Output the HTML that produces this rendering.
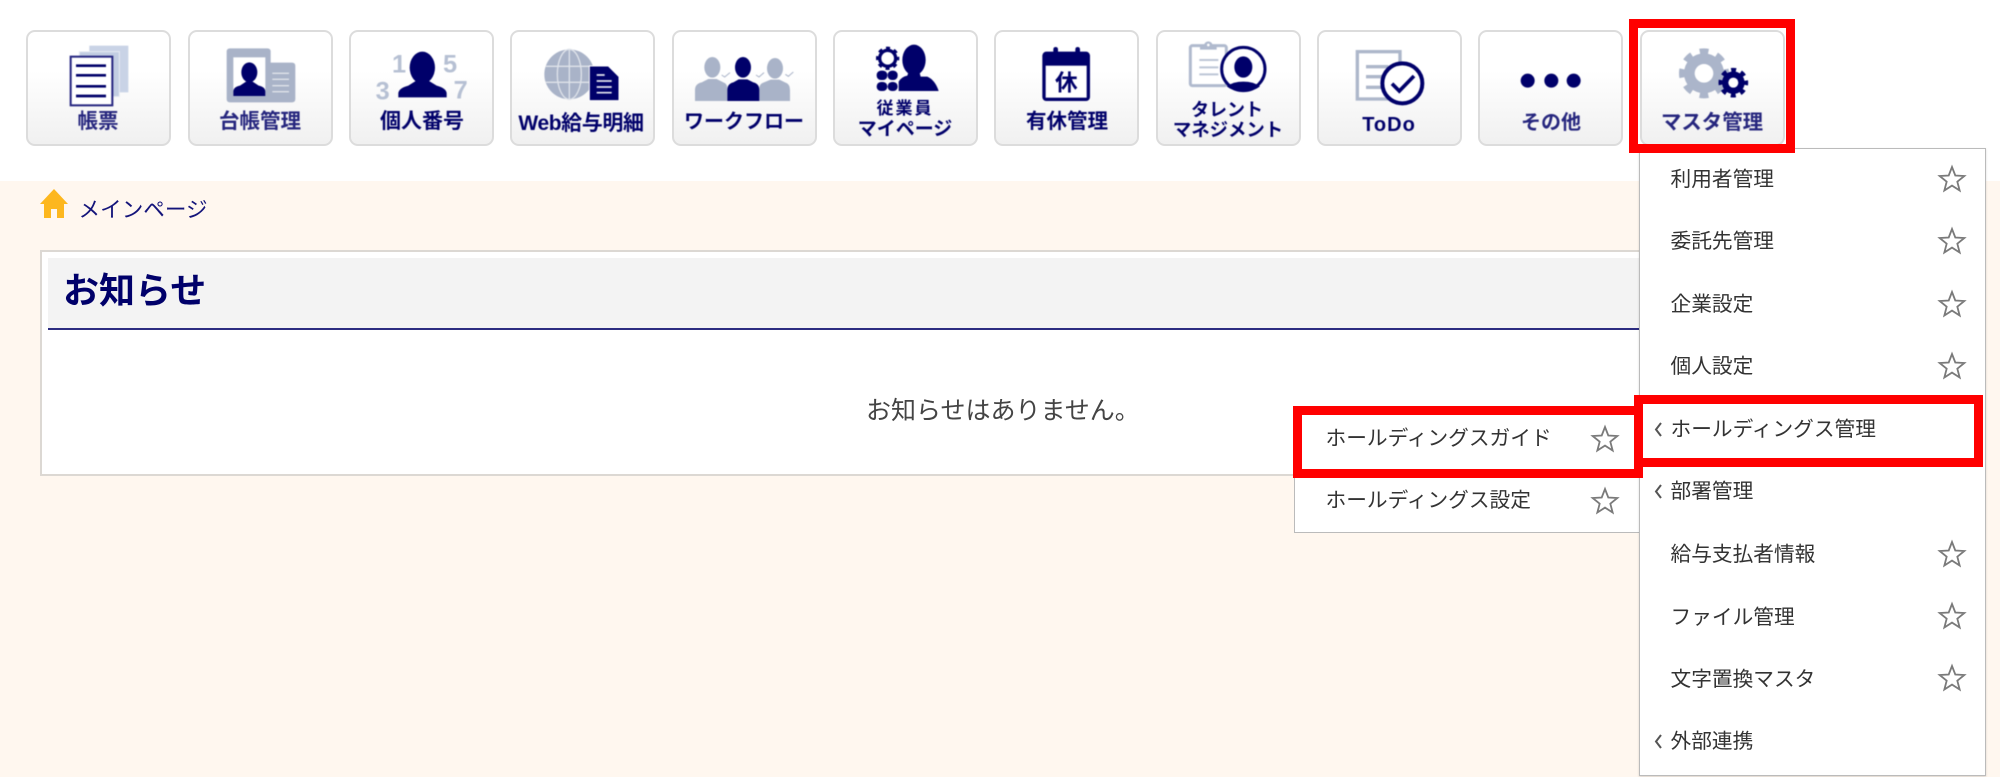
<!DOCTYPE html>
<html lang="ja"><head><meta charset="utf-8"><title>メインページ</title>
<style>
html,body{margin:0;padding:0;width:2000px;height:777px;overflow:hidden;background:#fff}
body{position:relative;font-family:"Liberation Sans","Noto Sans CJK JP",sans-serif;color:#333}
.a{position:absolute}
.btn{position:absolute;top:30px;width:145px;height:116px;box-sizing:border-box;border:2px solid #dcdcdc;border-radius:9px;background:linear-gradient(#fff 0%,#fff 35%,#f0f0f0 100%)}
.l{position:absolute;height:30px;line-height:30px;margin-top:1.5px;text-align:center;font-weight:700;color:#00006a;white-space:nowrap;filter:blur(.45px);transform:translateX(-50%)}
.t{position:absolute;height:30px;line-height:30px;margin-top:2px;font-size:20.7px;white-space:nowrap;color:#333}
.red{position:absolute;box-sizing:border-box;border:9px solid #f00}
</style></head><body>
<div class="a" style="left:0;top:181px;width:2000px;height:596px;background:#fff7ef"></div>

<div class="btn" style="left:26px"></div>
<div class="btn" style="left:187.5px"></div>
<div class="btn" style="left:348.5px"></div>
<div class="btn" style="left:510px"></div>
<div class="btn" style="left:671.5px"></div>
<div class="btn" style="left:833px"></div>
<div class="btn" style="left:994px"></div>
<div class="btn" style="left:1155.5px"></div>
<div class="btn" style="left:1317px"></div>
<div class="btn" style="left:1478px"></div>
<div class="btn" style="left:1639.5px"></div>

<svg class="a" style="left:0;top:0;filter:blur(.4px)" width="2000" height="181" viewBox="0 0 2000 181">
<g transform="translate(20,25) scale(.33333)">
 <rect x="208" y="62" width="117" height="140" fill="#c9d3e6"/>
 <rect x="178" y="80" width="120" height="135" fill="#c2cde2" stroke="#e8ecf3" stroke-width="3"/>
 <rect x="152" y="95" width="125" height="146" fill="#fff" stroke="#24247f" stroke-width="6"/>
 <path d="M168 122H258M168 151H258M168 184H258M168 213H258" stroke="#00006a" stroke-width="8"/>
 <path d="M630 70H742Q752 70 752 80V113H816Q826 113 826 123V222Q826 232 816 232H630Q620 232 620 222V80Q620 70 630 70Z" fill="#a9b3c8"/>
 <rect x="640" y="97" width="96" height="116" fill="#fff"/>
 <ellipse cx="688" cy="142" rx="24" ry="30" fill="#00006a"/>
 <path d="M640 213V200Q640 186 660 182L678 170H698L716 182Q736 186 736 200V213Z" fill="#00006a"/>
 <path d="M757 145H807M757 163H807M757 182H807M757 200H807" stroke="#dfe3ea" stroke-width="4"/>
 <ellipse cx="1207" cy="128" rx="38" ry="48" fill="#00006a"/>
 <path d="M1135 217V206Q1135 190 1165 182L1190 166H1224L1250 182Q1280 190 1280 206V217Z" fill="#00006a"/>
 <g fill="#b6c0d3" font-family="Liberation Sans" font-weight="700" font-size="76" text-anchor="middle">
  <text x="1137" y="142">1</text><text x="1290" y="142">5</text><text x="1088" y="224">3</text><text x="1322" y="220">7</text>
 </g>
</g>
<g transform="translate(500,25) scale(.33333)">
 <circle cx="208" cy="148" r="75" fill="#a9b3c8"/>
 <g fill="none" stroke="#dfe3ea" stroke-width="4"><ellipse cx="208" cy="148" rx="36" ry="75"/><path d="M208 73V223M137 124H279M137 172H279"/></g>
 <path d="M268 123H325L357 155V227H268Z" fill="#00006a" stroke="#fff" stroke-width="3"/>
 <path d="M290 150H314M290 168H335M290 186H335M290 203H335" stroke="#e6e8f0" stroke-width="5"/>
 <g fill="#a9b3c8">
  <ellipse cx="637" cy="127" rx="24" ry="31"/><path d="M585 228V195Q585 176 605 172L625 162H650L670 172Q682 176 682 190V228Z"/>
  <ellipse cx="825" cy="130" rx="24" ry="31"/><path d="M778 228V190Q778 176 792 172L812 164H838L855 172Q870 176 870 195V228Z"/>
 </g>
 <ellipse cx="729" cy="127" rx="24" ry="31" fill="#00006a"/>
 <path d="M682 228V195Q682 176 700 172L716 163H742L760 172Q778 176 778 195V228Z" fill="#00006a"/>
 <path d="M665 150L674 156L690 143M768 150L777 156L792 143M856 148L865 154L880 141" fill="none" stroke="#a9b3c8" stroke-width="3"/>
 <circle cx="1163" cy="100" r="24" fill="#fff" stroke="#00006a" stroke-width="10"/>
 <circle cx="1163" cy="100" r="29" fill="none" stroke="#00006a" stroke-width="12" stroke-dasharray="11.4 11.4" stroke-dashoffset="5.7"/>
 <circle cx="1163" cy="100" r="13" fill="#fff"/>
 <g fill="#00006a"><rect x="1130" y="137" width="32" height="28" rx="13"/><rect x="1163" y="137" width="30" height="28" rx="13"/><rect x="1130" y="171" width="32" height="27" rx="13"/><rect x="1163" y="171" width="30" height="27" rx="13"/>
 <ellipse cx="1242" cy="105" rx="35" ry="46"/><path d="M1196 198V170Q1205 155 1222 152L1226 140H1258L1262 155H1282Q1305 165 1316 198Z"/></g>
</g>
<g transform="translate(1000,25) scale(.33333)">
 <rect x="127" y="80" width="143" height="148" rx="12" fill="#00006a"/>
 <rect x="160" y="66" width="14" height="30" rx="7" fill="#00006a"/><rect x="226" y="66" width="14" height="30" rx="7" fill="#00006a"/>
 <rect x="137" y="122" width="123" height="96" fill="#fff"/>
 <text x="199" y="196" text-anchor="middle" font-family="Noto Sans CJK JP" font-weight="700" font-size="68" fill="#00006a">休</text>
 <rect x="571" y="62" width="108" height="120" rx="6" fill="#fff" stroke="#b0bace" stroke-width="9"/>
 <path d="M600 62H612A13 13 0 0 1 638 62H650V74H600Z" fill="#b0bace"/><circle cx="625" cy="60" r="4" fill="#fff"/>
 <path d="M598 105H655M598 127H655M598 148H655" stroke="#bcc5d6" stroke-width="6"/>
 <circle cx="730" cy="132" r="65" fill="#fff" stroke="#00006a" stroke-width="9"/>
 <ellipse cx="730" cy="126" rx="27" ry="32" fill="#00006a"/>
 <path d="M680 184Q700 170 730 170Q760 170 780 184Q760 200 730 200Q700 200 680 184Z" fill="#00006a"/>
 <rect x="1072" y="80" width="128" height="142" fill="#fff" stroke="#adb7ca" stroke-width="10"/>
 <path d="M1098 125H1165M1098 155H1155M1098 187H1150" stroke="#adb7ca" stroke-width="10"/>
 <circle cx="1207" cy="175" r="60" fill="#fff" stroke="#00006a" stroke-width="12"/>
 <path d="M1176 176L1198 198L1242 153" fill="none" stroke="#00006a" stroke-width="11"/>
</g>
<g transform="translate(1480,15) scale(.33333)">
 <g fill="#00006a"><circle cx="143" cy="197" r="21"/><circle cx="214" cy="197" r="21"/><circle cx="281" cy="197" r="21"/></g>
 <circle cx="672" cy="175" r="60" fill="#abb5ca"/>
 <circle cx="672" cy="175" r="66" fill="none" stroke="#abb5ca" stroke-width="18" stroke-dasharray="25.9 25.9" stroke-dashoffset="13"/>
 <circle cx="672" cy="175" r="28" fill="#fff"/>
 <circle cx="760" cy="203" r="34" fill="#00006a"/>
 <circle cx="760" cy="203" r="38" fill="none" stroke="#00006a" stroke-width="13" stroke-dasharray="14.9 14.9" stroke-dashoffset="7.5"/>
 <circle cx="760" cy="203" r="15" fill="#fff"/>
</g>
</svg>

<div class="l" style="left:98px;top:105px;font-size:20.5px;color:#26267e">帳票</div>
<div class="l" style="left:260px;top:105px;font-size:20.5px;color:#26267e">台帳管理</div>
<div class="l" style="left:422px;top:105px;font-size:21px">個人番号</div>
<div class="l" style="left:581px;top:107px;font-size:21px;letter-spacing:-.4px">Web給与明細</div>
<div class="l" style="left:744px;top:105px;font-size:20px">ワークフロー</div>
<div class="l" style="left:905px;top:92px;font-size:17px;letter-spacing:2px">従業員</div>
<div class="l" style="left:905px;top:113px;font-size:19px">マイページ</div>
<div class="l" style="left:1067px;top:105px;font-size:20.5px">有休管理</div>
<div class="l" style="left:1227px;top:93px;font-size:18px">タレント</div>
<div class="l" style="left:1228px;top:113px;font-size:18.4px">マネジメント</div>
<div class="l" style="left:1389px;top:108px;font-size:20px;letter-spacing:1px">ToDo</div>
<div class="l" style="left:1551px;top:106px;font-size:20px;color:#26267e">その他</div>
<div class="l" style="left:1712px;top:106px;font-size:20.4px;color:#26267e">マスタ管理</div>

<svg class="a" style="left:40px;top:189px" width="29" height="30" viewBox="0 0 29 30"><path d="M14 0L28 15H24V29H17V20H11V29H4V15H0Z" fill="#fdb71e"/></svg>
<div class="a" style="left:78.500px;top:192px;height:27px;line-height:36px;overflow:hidden;font-size:21.6px;color:#14147a;white-space:nowrap">メインページ</div>

<div class="a" style="left:40px;top:250px;width:1640px;height:226px;box-sizing:border-box;background:#fff;border:2px solid #dcd8d3"></div>
<div class="a" style="left:47.5px;top:258px;width:1620px;height:70px;background:#f3f3f3;border-bottom:2px solid #2c2c80"></div>
<div class="a" style="left:63px;top:266px;height:50px;line-height:50px;font-size:36px;font-weight:700;color:#00006a;white-space:nowrap">お知らせ</div>
<div class="a" style="left:866px;top:393px;height:36px;line-height:36px;font-size:25px;color:#444;white-space:nowrap">お知らせはありません。</div>

<div class="a" style="left:1294px;top:410px;width:346px;height:123px;box-sizing:border-box;background:#fff;border:1.5px solid #bbb"></div>
<div class="t" style="left:1325.500px;top:422px">ホールディングスガイド</div>
<div class="t" style="left:1325.500px;top:484px">ホールディングス設定</div>

<div class="a" style="left:1639px;top:148px;width:347px;height:628px;box-sizing:border-box;background:#fff;border:1.5px solid #bbb;box-shadow:0 1px 2px rgba(0,0,0,.15)"></div>
<div class="t" style="left:1670.500px;top:163px">利用者管理</div>
<div class="t" style="left:1670.500px;top:225px">委託先管理</div>
<div class="t" style="left:1670.500px;top:288px">企業設定</div>
<div class="t" style="left:1670.500px;top:350px">個人設定</div>
<div class="t" style="left:1670.500px;top:413px">ホールディングス管理</div>
<div class="t" style="left:1670.500px;top:475px">部署管理</div>
<div class="t" style="left:1670.500px;top:538px">給与支払者情報</div>
<div class="t" style="left:1670.500px;top:601px">ファイル管理</div>
<div class="t" style="left:1670.500px;top:663px">文字置換マスタ</div>
<div class="t" style="left:1670.500px;top:725px">外部連携</div>

<svg class="a" style="left:0;top:0" width="2000" height="777" viewBox="0 0 2000 777">
<g fill="none" stroke="#7a7a7a" stroke-width="1.800">
 <polygon transform="translate(1952,180)" points="0,-13 3.29,-4.53 12.36,-4.02 5.33,1.73 7.64,10.52 0,5.6 -7.64,10.52 -5.33,1.73 -12.36,-4.02 -3.29,-4.53"/>
 <polygon transform="translate(1952,242)" points="0,-13 3.29,-4.53 12.36,-4.02 5.33,1.73 7.64,10.52 0,5.6 -7.64,10.52 -5.33,1.73 -12.36,-4.02 -3.29,-4.53"/>
 <polygon transform="translate(1952,305)" points="0,-13 3.29,-4.53 12.36,-4.02 5.33,1.73 7.64,10.52 0,5.6 -7.64,10.52 -5.33,1.73 -12.36,-4.02 -3.29,-4.53"/>
 <polygon transform="translate(1952,367)" points="0,-13 3.29,-4.53 12.36,-4.02 5.33,1.73 7.64,10.52 0,5.6 -7.64,10.52 -5.33,1.73 -12.36,-4.02 -3.29,-4.53"/>
 <polygon transform="translate(1952,555)" points="0,-13 3.29,-4.53 12.36,-4.02 5.33,1.73 7.64,10.52 0,5.6 -7.64,10.52 -5.33,1.73 -12.36,-4.02 -3.29,-4.53"/>
 <polygon transform="translate(1952,617)" points="0,-13 3.29,-4.53 12.36,-4.02 5.33,1.73 7.64,10.52 0,5.6 -7.64,10.52 -5.33,1.73 -12.36,-4.02 -3.29,-4.53"/>
 <polygon transform="translate(1952,679)" points="0,-13 3.29,-4.53 12.36,-4.02 5.33,1.73 7.64,10.52 0,5.6 -7.64,10.52 -5.33,1.73 -12.36,-4.02 -3.29,-4.53"/>
 <polygon transform="translate(1605,440)" points="0,-13 3.29,-4.53 12.36,-4.02 5.33,1.73 7.64,10.52 0,5.6 -7.64,10.52 -5.33,1.73 -12.36,-4.02 -3.29,-4.53"/>
 <polygon transform="translate(1605,502)" points="0,-13 3.29,-4.53 12.36,-4.02 5.33,1.73 7.64,10.52 0,5.6 -7.64,10.52 -5.33,1.73 -12.36,-4.02 -3.29,-4.53"/>
</g>
<path d="M1661 423L1656 429.500L1661 436M1661 485L1656 491.500L1661 498M1661 735L1656 741.500L1661 748" fill="none" stroke="#555" stroke-width="2"/>
</svg>

<div class="red" style="left:1629px;top:19px;width:166px;height:134px"></div>
<div class="red" style="left:1634px;top:395px;width:349px;height:72px"></div>
<div class="red" style="left:1293px;top:406px;width:350px;height:72px"></div>
</body></html>
